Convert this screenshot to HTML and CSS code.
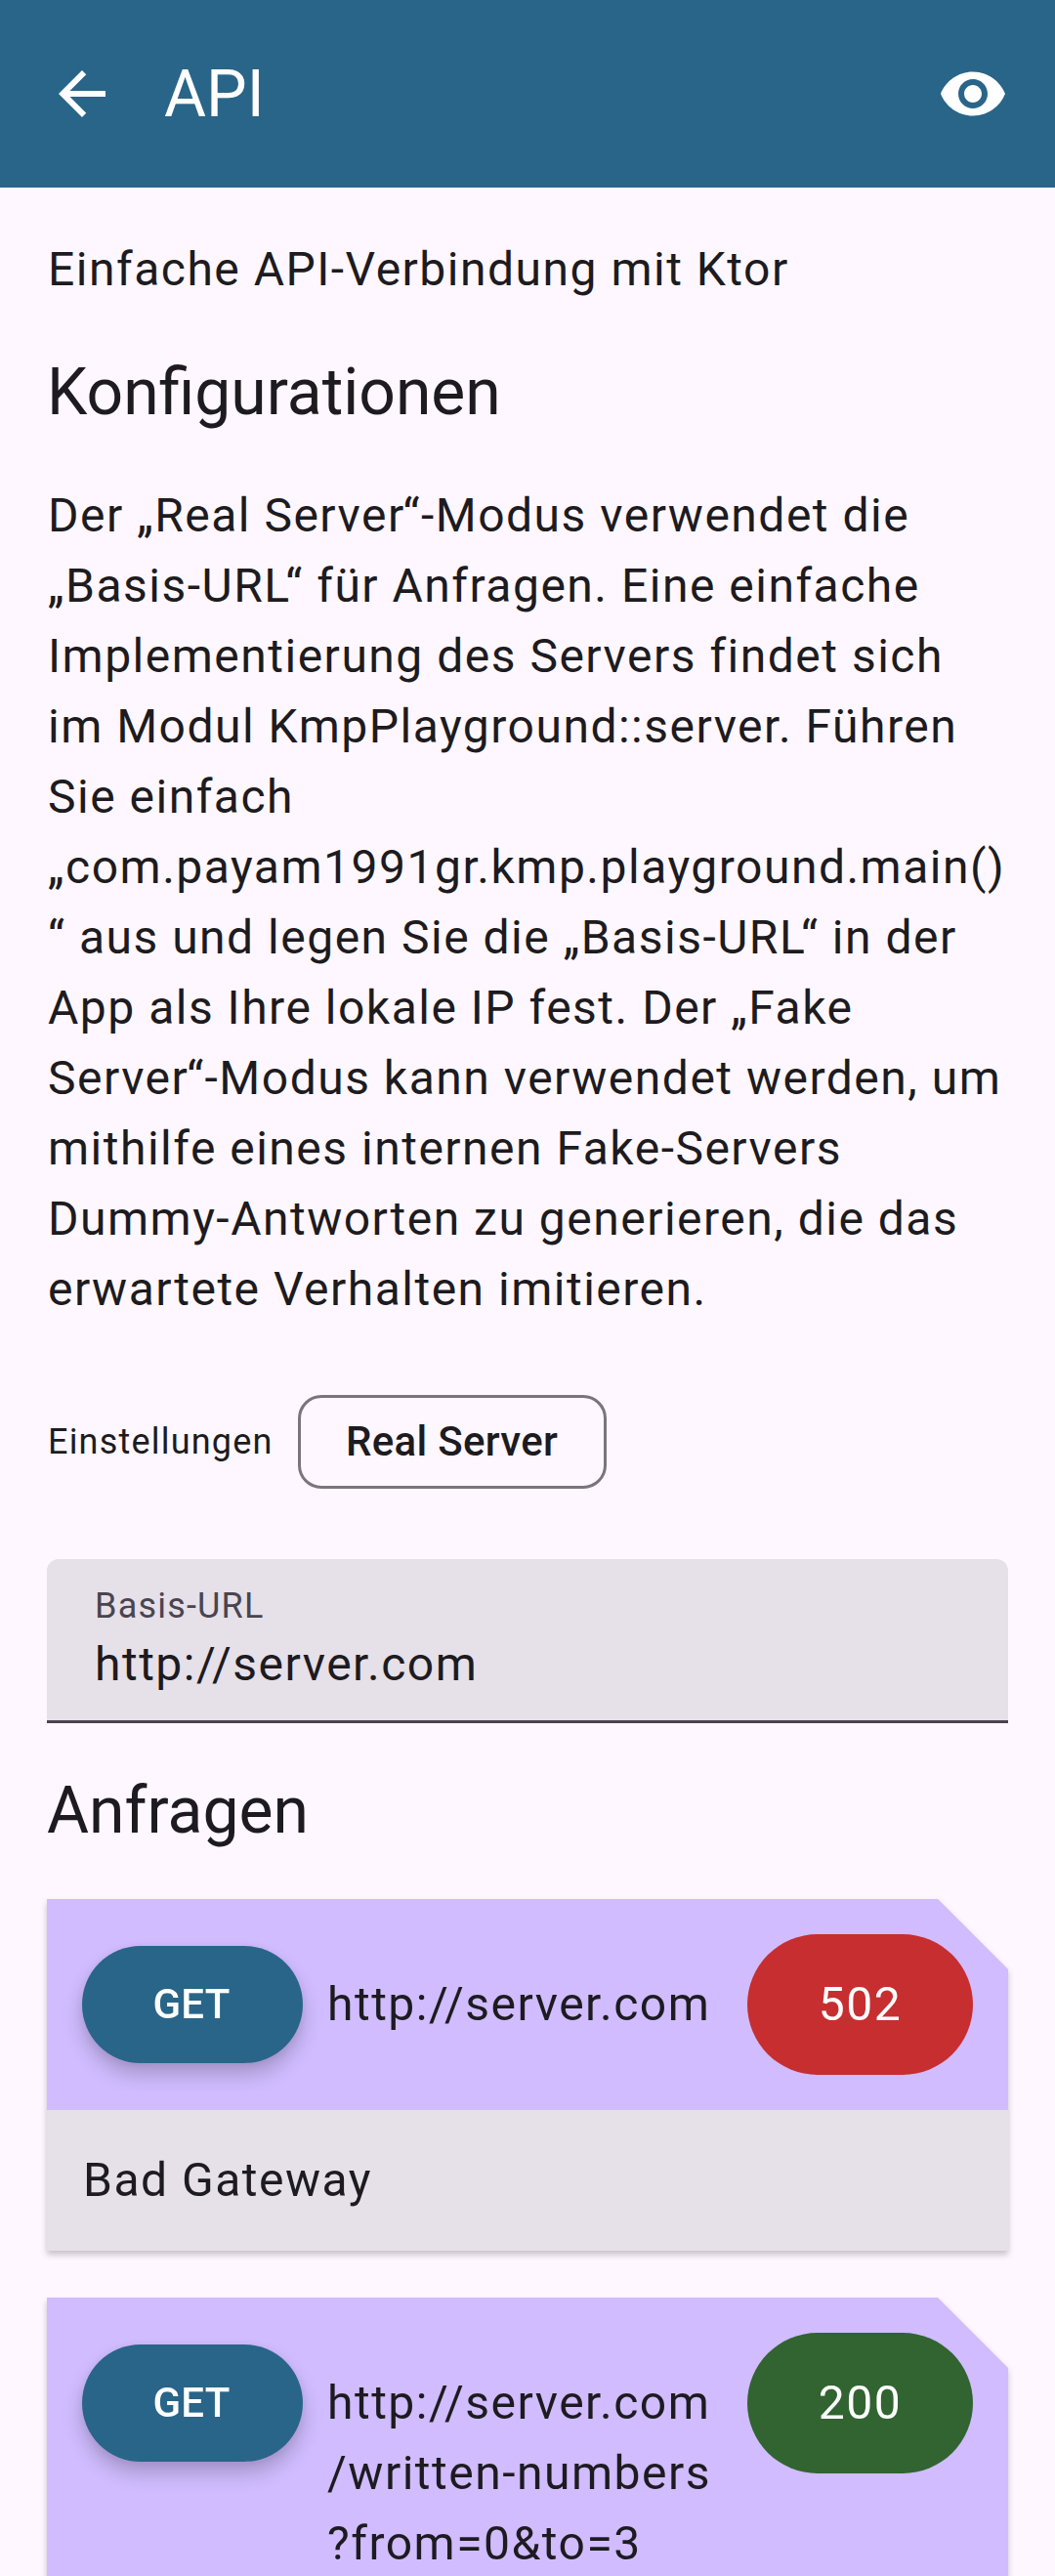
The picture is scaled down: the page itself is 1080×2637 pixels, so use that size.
FILE: index.html
```
<!DOCTYPE html>
<html lang="de">
<head>
<meta charset="utf-8">
<title>API</title>
<link rel="stylesheet" href="styles.css">
</head>
<body>
<header class="app-bar">
  <svg class="icon" viewBox="0 0 24 24" role="img" aria-label="Zurück"><path d="M20 11H7.83l5.59-5.59L12 4l-8 8 8 8 1.41-1.41L7.83 13H20v-2z"/></svg>
  <h1 class="title app-title">API</h1>
  <svg class="icon" viewBox="0 0 24 24" role="img" aria-label="Anzeigen"><path d="M12 4.5C7 4.5 2.73 7.61 1 12c1.73 4.39 6 7.5 11 7.5s9.27-3.11 11-7.5c-1.73-4.39-6-7.5-11-7.5zM12 17c-2.76 0-5-2.24-5-5s2.24-5 5-5 5 2.24 5 5-2.24 5-5 5zm0-8c-1.66 0-3 1.34-3 3s1.34 3 3 3 3-1.34 3-3-1.34-3-3-3z"/></svg>
</header>
<main class="content">
  <p class="text">Einfache API-Verbindung mit Ktor</p>
  <h2 class="title">Konfigurationen</h2>
  <p class="text">Der „Real Serve<span class="kern">r</span>“-Modus verwendet die<br>„Basis-UR<span class="kern-wide">L</span>“ für Anfragen. Eine einfache<br>Implementierung des Servers findet sich<br>im Modul KmpPlayground::server. Führen<br>Sie einfach<br>„com.payam1991gr.kmp.playground.main()<br>“ aus und legen Sie die „Basis-UR<span class="kern-wide">L</span>“ in der<br>App als Ihre lokale IP fest. Der „Fake<br>Serve<span class="kern">r</span>“-Modus kann verwendet werden, um<br>mithilfe eines internen Fake-Servers<br>Dummy-Antworten zu generieren, die das<br>erwartete Verhalten imitieren.</p>
  <div class="settings">
    <span class="caption">Einstellungen</span>
    <button class="chip">Real Server</button>
  </div>
  <label class="field">
    <span class="caption field-label">Basis-URL</span>
    <span class="text">http://server.com</span>
  </label>
  <h2 class="title">Anfragen</h2>
  <article class="card-shadow">
    <div class="card">
      <div class="card-head">
        <button class="method">GET</button>
        <span class="text url">http://server.com</span>
        <span class="text status status-error">502</span>
      </div>
      <p class="text card-body">Bad Gateway</p>
    </div>
  </article>
  <article class="card-shadow">
    <div class="card">
      <div class="card-head">
        <button class="method">GET</button>
        <span class="text url">http://server.com<br>/written-numbers<br>?from=0&amp;to=3</span>
        <span class="text status status-ok">200</span>
      </div>
    </div>
  </article>
</main>
</body>
</html>
```
FILE: styles.css
```
* {
  box-sizing: border-box;
}

body {
  display: flex;
  flex-direction: column;
  height: 2637px;
  margin: 0;
  overflow: hidden;
  background: #fef7ff;
  color: #1d1b20;
  font-family: Roboto, sans-serif;
}

.app-bar {
  display: flex;
  flex: none;
  align-items: center;
  height: 192px;
  padding: 0 48px;
  background: #296588;
  color: #fff;
}

.icon {
  width: 72px;
  height: 72px;
  fill: currentColor;
}

.app-title {
  flex: 1;
  padding: 1px 0 0 48px;
}

.title {
  margin: 0;
  font-size: 66px;
  font-weight: 400;
  line-height: 84px;
}

.text {
  margin: 0;
  padding-left: 1px;
  font-size: 48px;
  line-height: 72px;
  letter-spacing: 1.5px;
  white-space: nowrap;
}

.kern {
  letter-spacing: -0.7px;
}

.kern-wide {
  letter-spacing: -3.8px;
}

.caption {
  padding-left: 1px;
  font-size: 36px;
  line-height: 48px;
  letter-spacing: 1.2px;
}

.content {
  display: flex;
  flex: none;
  flex-direction: column;
  gap: 48px;
  padding: 48px;
}

.settings {
  display: flex;
  align-items: center;
  gap: 25px;
  height: 144px;
}

.chip {
  width: 316px;
  height: 96px;
  padding: 0;
  border: 3px solid #79747e;
  border-radius: 24px;
  background: none;
  color: inherit;
  font: 500 42px/60px Roboto, sans-serif;
  letter-spacing: 0.3px;
}

.field {
  display: flex;
  flex-direction: column;
  height: 168px;
  padding: 24px 48px 0;
  border-radius: 12px 12px 0 0;
  background: #e6e0e9;
  box-shadow: inset 0 -3px #49454f;
}

.field-label {
  color: #49454f;
}

.card-shadow {
  filter: drop-shadow(0 4px 3px rgba(0, 0, 0, 0.22));
}

.card {
  background: #e6e0e9;
  clip-path: polygon(0 0, calc(100% - 72px) 0, 100% 72px, 100% 100%, 0 100%);
}

.card-head {
  display: flex;
  align-items: flex-start;
  gap: 24px;
  padding: 36px;
  background: #d0bcff;
}

.method {
  width: 226px;
  height: 120px;
  margin: 12px 0;
  padding: 0 2px 0 0;
  border: 0;
  border-radius: 60px;
  background: #296588;
  box-shadow: 0 12px 20px rgba(0, 0, 0, 0.2), 0 2px 8px rgba(0, 0, 0, 0.06);
  color: #fff;
  font: 500 42px/60px Roboto, sans-serif;
  letter-spacing: 0.3px;
}

.url {
  flex: 1;
  padding-top: 36px;
}

.status {
  width: 231px;
  padding: 36px 0;
  border-radius: 72px;
  color: #fff;
  text-align: center;
}

.status-error {
  background: #c72e2f;
}

.status-ok {
  background: #316430;
}

.card-body {
  padding: 36px 36px 36px 37px;
}
```
